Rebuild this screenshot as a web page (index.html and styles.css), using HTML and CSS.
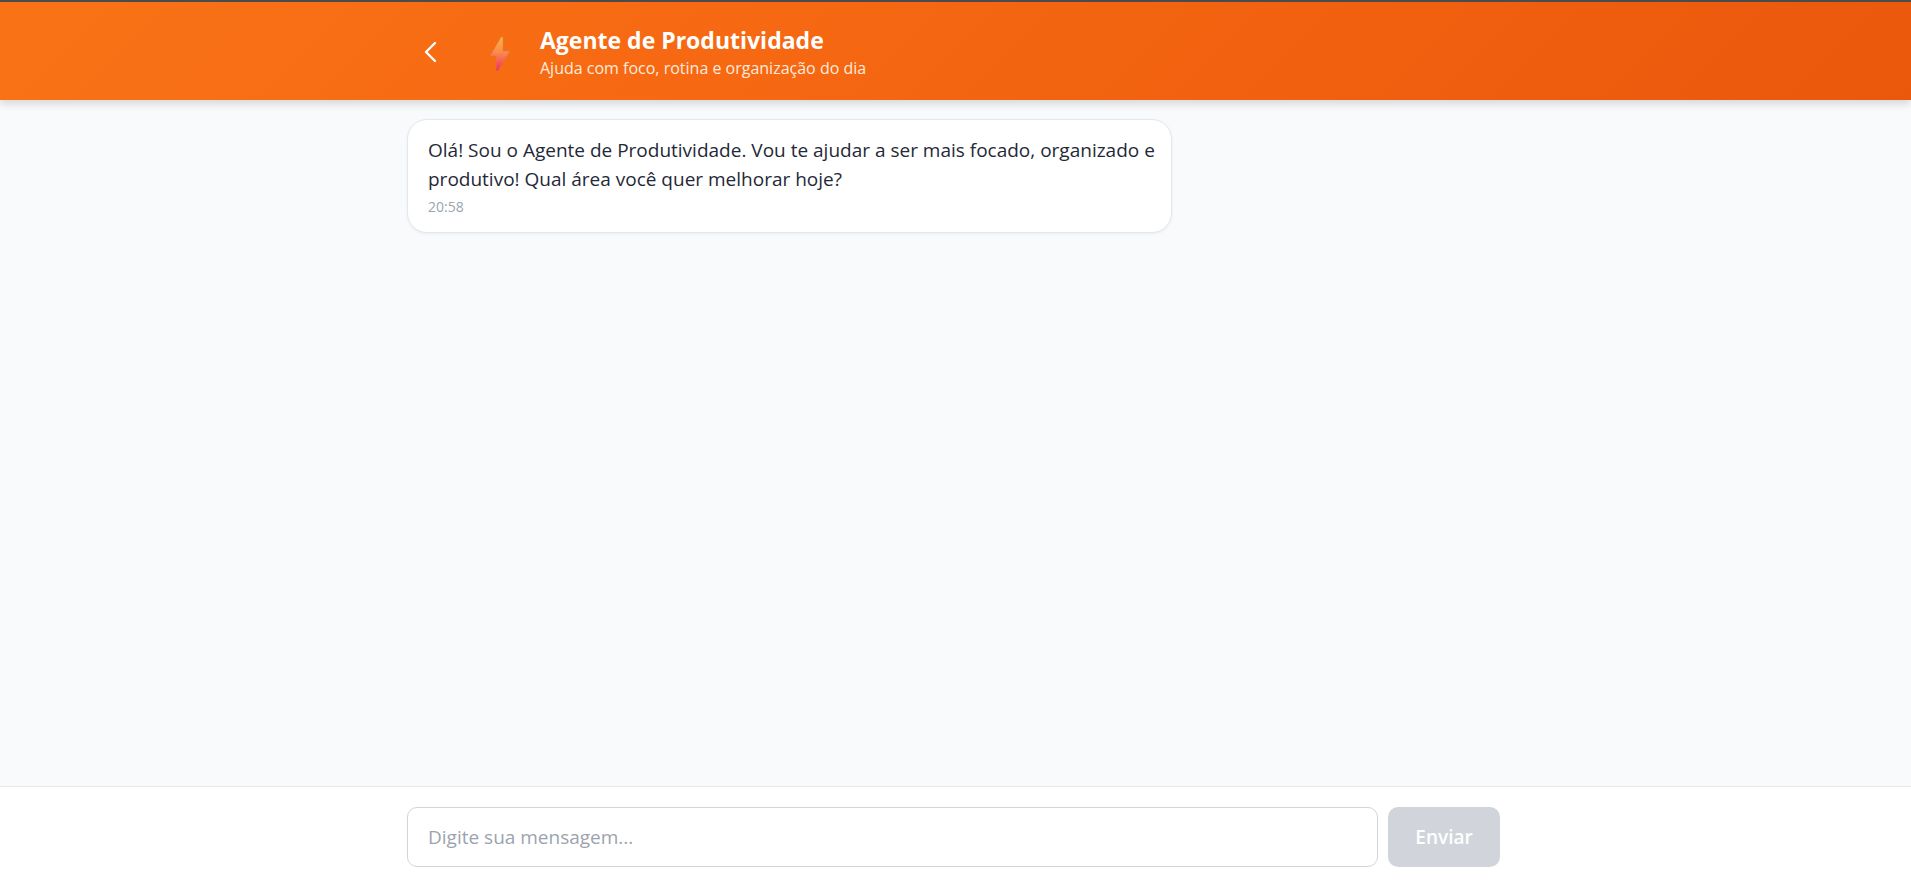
FILE: index.html
```html
<!DOCTYPE html>
<html lang="pt-BR">
<head>
<meta charset="utf-8">
<title>Agente de Produtividade</title>
<link rel="stylesheet" href="styles.css">
</head>
<body>
<div class="page">
  <header class="header">
    <div class="container header-row">
      <button class="back" type="button" aria-label="Voltar">
        <svg width="24" height="24" viewBox="0 0 24 24" fill="none" stroke="currentColor" stroke-width="2.4" stroke-linecap="round" stroke-linejoin="round"><path d="M16 3 7 12l9 9"/></svg>
      </button>
      <svg class="bolt" width="40" height="40" viewBox="0 0 40 40" aria-hidden="true">
        <defs><linearGradient id="bolt-fill" x1="0" y1="0" x2="0" y2="1"><stop offset="0" stop-color="#fdb43f"/><stop offset=".45" stop-color="#fb8a4c"/><stop offset="1" stop-color="#f1305c"/></linearGradient></defs>
        <path d="M21 3h2v14h7L18 37h-2V22h-6z" fill="url(#bolt-fill)" stroke="#d97848" stroke-width=".5" stroke-linejoin="round"/>
      </svg>
      <div class="heading">
        <h1 class="title">Agente de Produtividade</h1>
        <p class="subtitle">Ajuda com foco, rotina e organização do dia</p>
      </div>
    </div>
  </header>
  <main class="messages">
    <div class="container">
      <article class="bubble">
        <p class="text">Olá! Sou o Agente de Produtividade. Vou te ajudar a ser mais focado, organizado e produtivo! Qual área você quer melhorar hoje?</p>
        <time class="time">20:58</time>
      </article>
    </div>
  </main>
  <footer class="footer">
    <form class="container composer">
      <input class="field" type="text" placeholder="Digite sua mensagem..." aria-label="Mensagem">
      <button class="send" type="submit" disabled>Enviar</button>
    </form>
  </footer>
</div>
</body>
</html>
```
FILE: styles.css
```css
* { box-sizing: border-box; }
body, h1, p { margin: 0; }
body {
  font-family: "Segoe UI", "Open Sans", "Noto Sans", sans-serif;
  background: #f9fafb;
}
.page { display: flex; flex-direction: column; min-height: 100vh; }
.container {
  width: 100%;
  max-width: 1133px;
  margin: 0 auto;
  padding: 0 22px 0 18px;
}
.header {
  color: #fff;
  background: linear-gradient(135deg, #f97316 0%, #f66812 40%, #ea580c 100%);
  border-top: 2px solid #4b4b4b;
  box-shadow: 0 4px 8px rgba(0, 0, 0, .14);
}
.header-row { display: flex; align-items: center; padding-top: 24px; padding-bottom: 18px; }
.back {
  display: flex;
  padding: 10px 12px 14px;
  border: 0;
  background: none;
  color: inherit;
}
.bolt { margin-left: 25px; }
.heading { margin-left: 20px; }
.title { font-size: 23px; font-weight: 700; line-height: 28px; }
.subtitle { font-size: 16px; line-height: 28px; color: #ffeadb; }
.messages { flex: 1; padding-top: 19px; }
.bubble {
  width: 70%;
  padding: 16px 12px 12px 20px;
  background: #fff;
  border: 1px solid #e5e7eb;
  border-radius: 20px;
  box-shadow: 0 1px 3px rgba(0, 0, 0, .06);
}
.text { font-size: 19px; line-height: 29px; color: #1f2937; }
.time { display: block; font-size: 14px; line-height: 26px; color: #9ca3af; }
.footer { padding: 20px 0 18px; background: #fff; border-top: 1px solid #e5e7eb; }
.composer { display: flex; gap: 10px; }
.field, .send { height: 60px; border-radius: 10px; font-family: inherit; font-size: 19px; }
.field {
  flex: 1;
  min-width: 0;
  padding: 0 20px;
  border: 1px solid #d1d5db;
  background: #fff;
  color: #1f2937;
}
.field::placeholder { color: #9ca3af; opacity: 1; }
.send { width: 112px; border: 0; background: #d1d5db; color: #fff; font-weight: 600; }
```
